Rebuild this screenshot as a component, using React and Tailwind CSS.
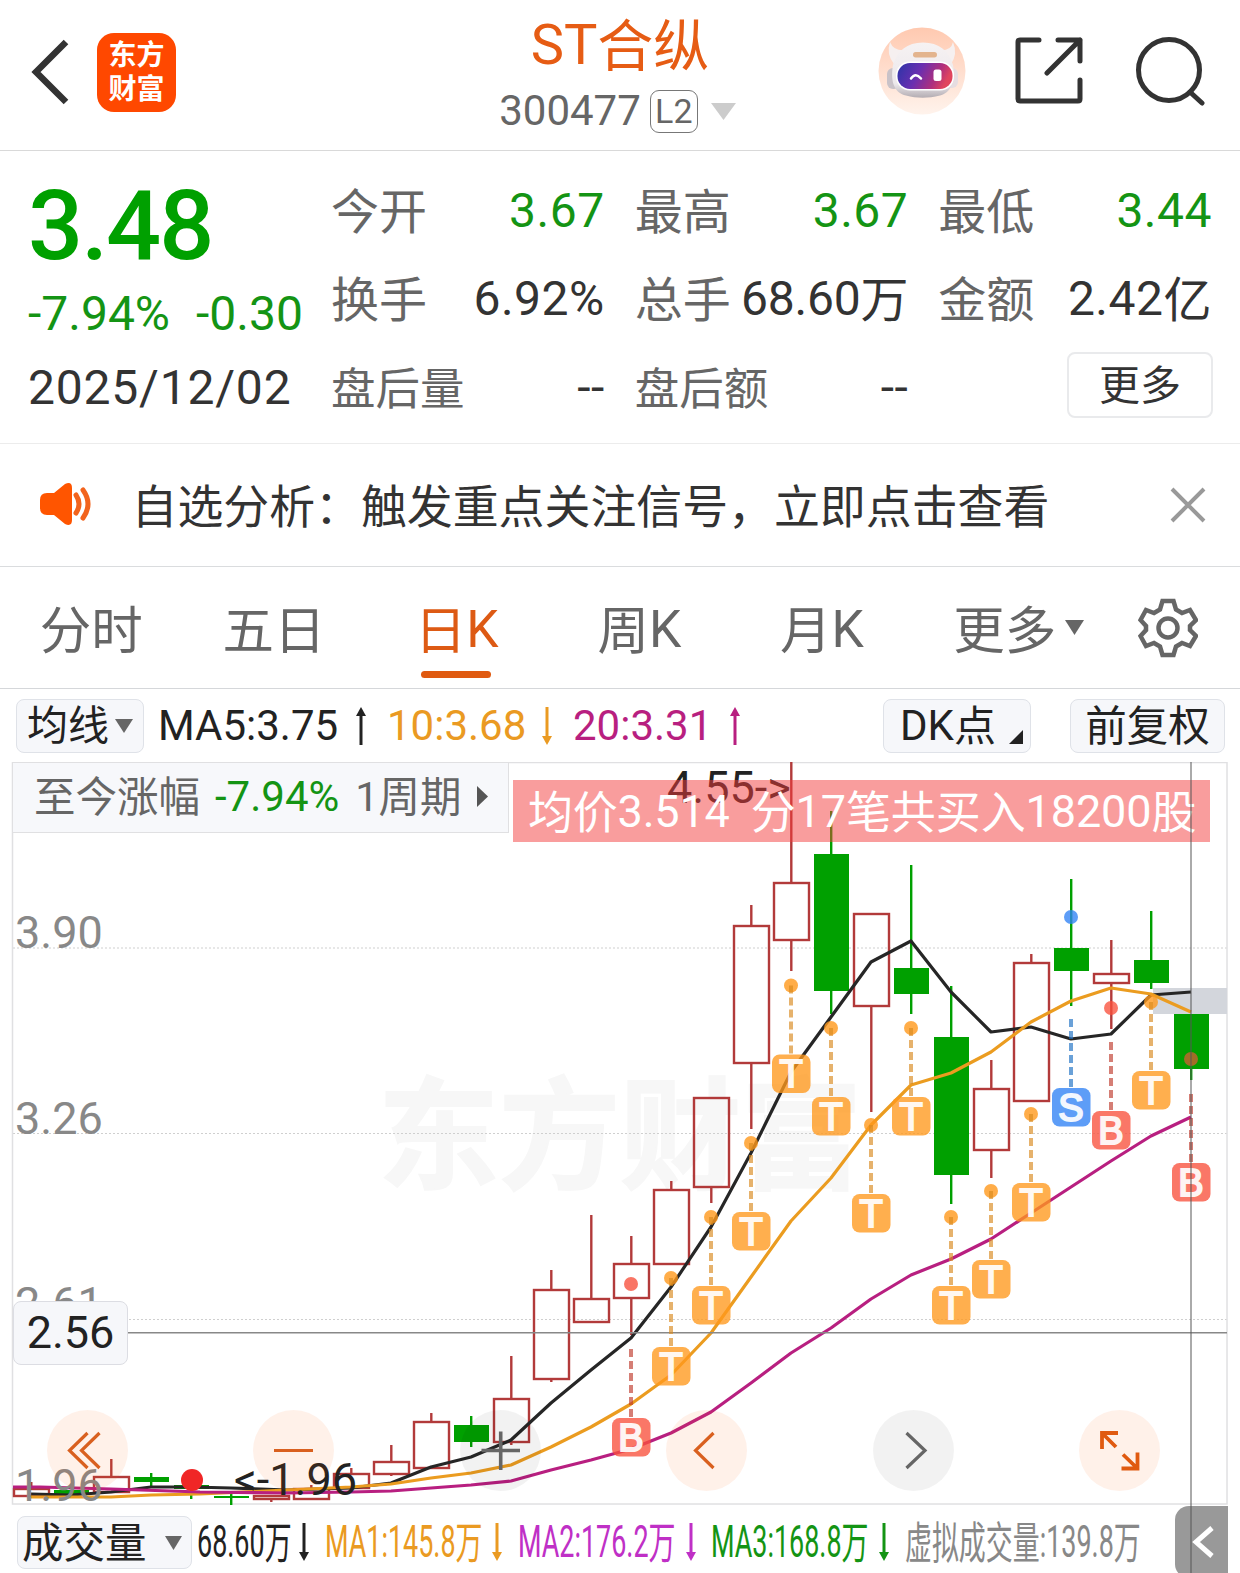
import React from "react";

const UP = "#b23a3a";
const DOWN = "#00a000";

// [x, bodyTop, bodyBottom, wickTop, wickBottom, type]
const candles = [
  [31, 1488, 1497, 1482, 1497, "up"],
  [71, 1490, 1494, 1490, 1494, "down"],
  [111, 1476, 1493, 1459, 1493, "up"],
  [151, 1477, 1482, 1473, 1486, "down"],
  [191, 1485, 1489, 1485, 1499, "down"],
  [231, 1496, 1498, 1494, 1505, "down"],
  [271, 1495, 1500, 1495, 1502, "up"],
  [311, 1488, 1500, 1485, 1500, "up"],
  [351, 1473, 1489, 1468, 1489, "up"],
  [391, 1461, 1475, 1445, 1476, "up"],
  [431, 1421, 1469, 1413, 1469, "up"],
  [471, 1425, 1442, 1416, 1447, "down"],
  [511, 1398, 1443, 1356, 1445, "up"],
  [551, 1289, 1380, 1270, 1382, "up"],
  [591, 1298, 1323, 1215, 1323, "up"],
  [631, 1263, 1299, 1236, 1335, "up"],
  [671, 1189, 1265, 1181, 1265, "up"],
  [711, 1097, 1188, 1097, 1203, "up"],
  [751, 925, 1064, 905, 1129, "up"],
  [791, 882, 941, 762, 971, "up"],
  [831, 854, 991, 811, 1014, "down"],
  [871, 913, 1007, 913, 1112, "up"],
  [911, 968, 994, 865, 1014, "down"],
  [951, 1037, 1175, 986, 1204, "down"],
  [991, 1088, 1151, 1060, 1178, "up"],
  [1031, 962, 1102, 954, 1102, "up"],
  [1071, 948, 971, 879, 1006, "down"],
  [1111, 973, 984, 940, 1029, "up"],
  [1151, 960, 983, 911, 989, "down"],
  [1191, 1014, 1069, 1014, 1080, "down"],
];

const ma5 =
  "31,1494 71,1495 111,1492 151,1487 191,1487 231,1488 287,1490 351,1488 391,1483 431,1467 471,1457 511,1440 551,1403 591,1370 631,1338 671,1287 711,1227 751,1153 791,1072 831,1017 871,962 911,941 951,992 991,1032 1031,1027 1071,1039 1111,1034 1151,995 1191,992";
const ma10 =
  "31,1497 111,1497 151,1495 200,1494 287,1490 351,1487 391,1484 431,1478 471,1473 511,1465 551,1447 591,1427 631,1404 671,1375 711,1333 751,1277 791,1221 831,1178 871,1125 911,1085 951,1073 991,1052 1031,1022 1071,1001 1111,988 1151,994 1191,1012";
const ma20 =
  "13,1487 40,1487 111,1489 200,1492 287,1493 351,1492 391,1491 431,1488 471,1485 511,1481 551,1470 591,1460 631,1449 671,1433 711,1412 751,1383 791,1353 831,1328 871,1299 911,1275 951,1259 991,1239 1031,1213 1071,1187 1111,1161 1151,1136 1191,1117";

// [x, badge centre, letter]
const trades = [
  [631, 1437, "B"],
  [671, 1366, "T"],
  [711, 1305, "T"],
  [751, 1231, "T"],
  [791, 1073.5, "T"],
  [831, 1116, "T"],
  [871, 1213, "T"],
  [911, 1116, "T"],
  [951, 1305, "T"],
  [991, 1279, "T"],
  [1031, 1202, "T"],
  [1071, 1107, "S"],
  [1111, 1130, "B"],
  [1151, 1090, "T"],
  [1191, 1182, "B"],
];

const tradeColors = {
  T: { fill: "#ff981c", dash: "#d98a1e" },
  B: { fill: "#f8513c", dash: "#bf3a2c" },
  S: { fill: "#2f81f5", dash: "#1c6fc4" },
};

const quotes = [
  { label: "今开", value: "3.67", green: true },
  { label: "最高", value: "3.67", green: true },
  { label: "最低", value: "3.44", green: true },
  { label: "换手", value: "6.92%" },
  { label: "总手", value: "68.60", unit: "万" },
  { label: "金额", value: "2.42", unit: "亿" },
  { label: "盘后量", value: "--", small: true },
  { label: "盘后额", value: "--", small: true },
];

const tabs = [
  { cn: "分时" },
  { cn: "五日" },
  { cn: "日", latin: "K", active: true },
  { cn: "周", latin: "K" },
  { cn: "月", latin: "K" },
  { cn: "更多", caret: true },
];

// Chinese glyphs sit a little lower than the digits beside them
const Cn = ({ children }) => <span className="align-[-0.035em] leading-[0]">{children}</span>;

const Arrow = ({ down, className }) => (
  <svg width="14" height="40" viewBox="0 0 14 40" className={className}>
    <g transform={down ? "rotate(180 7 20)" : undefined}>
      <path d="M7 6V39" stroke="currentColor" strokeWidth="3" />
      <path d="M7 1L12 10H2Z" fill="currentColor" />
    </g>
  </svg>
);

const Caret = ({ className, w = 18, h = 14 }) => (
  <svg width={w} height={h} viewBox="0 0 18 14" preserveAspectRatio="none" className={className}>
    <path d="M0 0H18L9 14Z" fill="currentColor" />
  </svg>
);

const Robot = () => (
  <svg width="88" height="88" viewBox="0 0 88 88">
    <defs>
      <linearGradient id="halo" x1="0" y1="0" x2="0" y2="1">
        <stop offset="0" stopColor="#ffc9b0" />
        <stop offset="1" stopColor="#fff3ec" />
      </linearGradient>
      <linearGradient id="shell" x1="0" y1="0" x2="0" y2="1">
        <stop offset="0" stopColor="#f6f2f3" />
        <stop offset="0.75" stopColor="#ece8eb" />
        <stop offset="1" stopColor="#b3acb2" />
      </linearGradient>
      <linearGradient id="visor" x1="0" y1="0" x2="1" y2="0.25">
        <stop offset="0" stopColor="#2b34a8" />
        <stop offset="0.45" stopColor="#6a2fb0" />
        <stop offset="0.8" stopColor="#b02f7c" />
        <stop offset="1" stopColor="#e0455e" />
      </linearGradient>
    </defs>
    <circle cx="44" cy="44" r="43.500" fill="url(#halo)" />
    <path d="M12 15Q8 27 16 37L29 23Q16 25 12 15ZM75 15Q80 27 73 37L59 23Q73 25 75 15Z" fill="#f6f0f0" />
    <rect x="9" y="41" width="13" height="21" rx="6" fill="#c9c2c8" />
    <rect x="67" y="41" width="13" height="20" rx="6" fill="#e6dde1" />
    <path d="M45 15.500C61 15.500 71 24 75 38C78 56 72 66 62 68.500C50 71.500 39 71.500 28 68.500C17 66 12 56 15 38C19 24 29 15.500 45 15.500Z" fill="url(#shell)" />
    <rect x="35" y="25" width="24" height="5.500" rx="2.700" fill="#e3b48e" />
    <rect x="18" y="34.500" width="58" height="29" rx="14" fill="#fff" />
    <rect x="19.500" y="36" width="55" height="26" rx="12.500" fill="url(#visor)" />
    <path d="M33 51.500Q37.500 45 43 51.500" fill="none" stroke="#fff" strokeWidth="2.500" strokeLinecap="round" />
    <rect x="55.500" y="42.500" width="8" height="11.500" rx="2.500" fill="#fff" />
  </svg>
);

const Header = () => (
  <header className="grid h-[151px] grid-cols-[1fr_auto_1fr] border-b border-[#d9d9d9]">
    <div className="flex items-center pl-[30px] pb-[6px]">
      <svg width="40" height="66" viewBox="0 0 40 66" fill="none" stroke="#333" strokeWidth="6.500">
        <path d="M36 3L6 33L36 63" />
      </svg>
      <div className="ml-[27px] flex h-[79px] w-[79px] flex-col items-center justify-center rounded-[17px] bg-[#ff4800] text-[28px] font-bold leading-[34px] text-white">
        <span>
          <Cn>东方</Cn>
        </span>
        <span>
          <Cn>财富</Cn>
        </span>
      </div>
    </div>

    <div className="flex flex-col items-center pt-3">
      <h1 className="text-[56px] leading-[66px] text-[#e65c14]">
        ST<Cn>合纵</Cn>
      </h1>
      <div className="mr-[5px] flex h-[66px] items-center text-[42px] leading-none text-[#666]">
        <span>300477</span>
        <span className="ml-[9px] flex h-[43px] w-[48px] items-center justify-center rounded-[9px] border-[1.5px] border-[#777] text-[34px]">
          L2
        </span>
        <Caret w={25} h={17} className="ml-[13px] text-[#ccc]" />
      </div>
    </div>

    <div className="flex items-center justify-end pr-[34px] pb-[8px]">
      <Robot />
      <svg className="ml-[49px]" width="68" height="68" viewBox="0 0 68 68" fill="none" stroke="#333" strokeWidth="5" strokeLinecap="round" strokeLinejoin="round">
        <path d="M24 3H5Q3 3 3 5V62Q3 64 5 64H63Q65 64 65 62V43" />
        <path d="M43 3H65V24M65 3L32 36" />
      </svg>
      <svg className="ml-[52px]" width="71" height="70" viewBox="0 0 71 70" fill="none" stroke="#333" strokeWidth="5" strokeLinecap="round">
        <circle cx="34" cy="34" r="30.500" />
        <path d="M55 56L67 67" />
      </svg>
    </div>
  </header>
);

const QuotePanel = () => (
  <section className="flex h-[293px] border-b border-[#ececec] text-[48px] text-[#333]">
    <div className="w-[331px] pt-[25px] pl-[28px]">
      <div className="h-[101px] text-[97px] font-medium leading-[101px] tracking-[-2px] text-[#00a000]">3.48</div>
      <div className="flex gap-[26px] whitespace-nowrap leading-[73px] text-[#149414]">
        <span>-7.94%</span>
        <span>-0.30</span>
      </div>
      <div className="leading-[75px] tracking-[0.8px]">2025/12/02</div>
    </div>
    <div className="grid w-[881px] grid-cols-3 grid-rows-[88px_89px_87px] gap-x-[30px] pt-4 leading-[88px]">
      {quotes.map((q) => (
        <div key={q.label} className="flex justify-between whitespace-nowrap">
          <span className={q.small ? "text-[44.500px] text-[#666]" : "text-[#666]"}>
            <Cn>{q.label}</Cn>
          </span>
          <span className={q.green ? "tracking-[0.5px] text-[#149414]" : q.value === "68.60" ? "tracking-[-0.2px]" : "tracking-[0.5px]"}>
            {q.value}
            {q.unit && <Cn>{q.unit}</Cn>}
          </span>
        </div>
      ))}
      <div className="flex items-center justify-end pb-[5px]">
        <button className="-mr-[1px] h-[66px] w-[146px] rounded-[8px] border-2 border-[#e9eaec] text-[41px] leading-[58px]">
          <Cn>更多</Cn>
        </button>
      </div>
    </div>
  </section>
);

const Notice = () => (
  <section className="flex h-[123px] items-center border-b border-[#dadcde] pl-[39px]">
    <svg width="53" height="44" viewBox="0 0 53 44" className="-mt-[2px]">
      <path d="M8 11H15L26 2Q33 -1 33 6V38Q33 45 26 42L15 33H8Q1 33 1 26V18Q1 11 8 11Z" fill="#ff5500" />
      <path d="M37 13Q43 22 37 31M44 8Q54 22 44 36" fill="none" stroke="#f2631c" strokeWidth="5" strokeLinecap="round" />
    </svg>
    <p className="ml-[39.5px] whitespace-nowrap text-[45.9px] leading-[60px] text-[#333]">
      <Cn>自选分析：触发重点关注信号，立即点击查看</Cn>
    </p>
    <svg className="ml-auto mr-[34px]" width="36" height="36" viewBox="0 0 36 36" stroke="#999" strokeWidth="4">
      <path d="M2 2L34 34M34 2L2 34" />
    </svg>
  </section>
);

const Tabs = () => (
  <nav className="flex h-[122px] items-start border-b border-[#d5d7da] text-[#666]">
    <div className="flex w-[1096px] pt-[2px] text-[51.500px] leading-[121px]">
      {tabs.map((tab) => (
        <div key={tab.cn} className={tab.active ? "relative flex-1 text-center text-[#dd5a14]" : "relative flex-1 text-center"}>
          <Cn>{tab.cn}</Cn>
          {tab.latin}
          {tab.active && <span className="absolute bottom-[12px] left-[56px] h-[7px] w-[70px] rounded-full bg-[#e05a10]" />}
          {tab.caret && <Caret w={19} h={15} className="absolute top-[51px] left-[152px]" />}
        </div>
      ))}
    </div>
    <svg className="mt-[31px] ml-[42px]" width="60" height="60" viewBox="0 0 60 60" fill="none" stroke="#666" strokeWidth="4.500">
      <path d="M24.500 3H35.500L38 11.500L44 15L52 12L58 22L52 28V32L58 38L52 48L44 45L38 48.500L35.500 57H24.500L22 48.500L16 45L8 48L2.500 38L8 32V28L2.500 22L8 12L16 15L22 11.500Z" />
      <circle cx="30" cy="30" r="9.500" />
    </svg>
  </nav>
);

const IndicatorBar = () => (
  <div className="flex h-[73px] items-center pl-4 text-[42px] leading-none text-[#222]">
    <button className="flex h-[54px] w-[128px] items-center justify-center gap-[6px] rounded-[8px] border-[1.5px] border-[#dfe2e8] bg-[#f6f7fa] text-[41px]">
      <span>
        <Cn>均线</Cn>
      </span>
      <Caret className="text-[#666]" />
    </button>
    <div className="ml-[14px] flex w-[210px] items-center justify-between">
      MA5:3.75 <Arrow />
    </div>
    <div className="ml-[19px] flex w-[167px] items-center justify-between text-[#ea9a22]">
      10:3.68 <Arrow down />
    </div>
    <div className="ml-[19px] flex w-[169px] items-center justify-between text-[#b81f80]">
      20:3.31 <Arrow />
    </div>
    <button className="relative ml-[141px] h-[54px] w-[148px] rounded-[8px] border-[1.5px] border-[#dfe2e8] bg-[#f6f7fa] pr-[18px]">
      DK<Cn>点</Cn>
      <svg className="absolute right-[7px] bottom-[8px]" width="14" height="14" viewBox="0 0 14 14">
        <path d="M14 0V14H0Z" fill="#222" />
      </svg>
    </button>
    <button className="ml-[39px] h-[54px] w-[155px] rounded-[8px] border-[1.5px] border-[#dfe2e8] bg-[#f6f7fa] text-[41.500px]">
      <Cn>前复权</Cn>
    </button>
  </div>
);

const Candle = ({ data }) => {
  const [x, top, bottom, high, low, type] = data;
  if (type === "down") {
    return (
      <g fill={DOWN}>
        <rect x={x - 17} y={top} width="35" height={bottom - top} />
        <rect x={x - 1} y={high} width="2.400" height={low - high} />
      </g>
    );
  }
  return (
    <g stroke={UP} strokeWidth="2.400" fill="none">
      <path d={`M${x + 0.3} ${high}V${top}M${x + 0.3} ${bottom}V${low}`} />
      <rect x={x - 17} y={top + 1} width="35" height={Math.max(bottom - top - 2, 2)} />
    </g>
  );
};

const Trade = ({ data }) => {
  const [x, y, letter] = data;
  const c = tradeColors[letter];
  return (
    <g>
      {letter === "T" && <circle cx={x} cy={y - 88} r="7" fill={c.fill} opacity="0.8" />}
      <path d={`M${x} ${y - 88}V${y - 20}`} stroke={c.dash} strokeWidth="4" strokeDasharray="8 4" opacity="0.65" />
      <rect x={x - 19} y={y - 19} width="38.500" height="38.500" rx="7.500" fill={c.fill} opacity="0.78" />
      <text x={x} y={y + 13.500} textAnchor="middle" fontSize="38" fill="#fff" stroke="#fff" strokeWidth="2" opacity="0.92" className="font-['Liberation_Sans',sans-serif]">
        {letter}
      </text>
    </g>
  );
};

const Controls = () => (
  <g fill="none" strokeWidth="3.200">
    <g fill="#ff5a00" fillOpacity="0.085">
      <circle cx="87.500" cy="1450.500" r="40.500" />
      <circle cx="293.500" cy="1450.500" r="40.500" />
      <circle cx="706.500" cy="1450.500" r="40.500" />
      <circle cx="1119.500" cy="1450.500" r="40.500" />
    </g>
    <g fill="#000" fillOpacity="0.05">
      <circle cx="500.500" cy="1450.500" r="40.500" />
      <circle cx="913.500" cy="1450.500" r="40.500" />
    </g>
    <g stroke="#d9601f">
      <path d="M87.500 1433L69.500 1450.500L87.500 1468M99.500 1433L81.500 1450.500L99.500 1468" />
      <path d="M274 1450.500H313" />
      <path d="M713.500 1433L695.500 1450.500L713.500 1468" />
    </g>
    <path d="M1116 1447L1102 1433M1102 1449V1433H1118M1123 1454.500L1137.500 1468.500M1137.500 1452.500V1468.500H1121.500" stroke="#e05a10" strokeWidth="3.800" />
    <g stroke="#666">
      <path d="M481.500 1450.500H520M500.700 1431.500V1470" strokeWidth="3.600" />
      <path d="M906.500 1433L925 1450.500L906.500 1468" />
    </g>
  </g>
);

const KLineChart = () => (
  <section className="relative h-[743px]">
    <svg width="1240" height="743" viewBox="0 762 1240 743" className="block">
      <text x="378" y="1179" fontSize="121" fontWeight="700" fill="#f7f7f7" stroke="#f7f7f7" strokeWidth="2">
        东方财富
      </text>
      <path d="M13 948H1227M13 1133.500H1227M13 1319.500H1227" stroke="#cfcfcf" strokeWidth="1" strokeDasharray="2 2" />
      <rect x="12.500" y="762.500" width="1214.500" height="741.500" fill="none" stroke="#e0e0e2" strokeWidth="1.500" />
      <rect x="1153" y="988" width="74" height="26" fill="#d3d6dc" />

      {candles.map((c) => (
        <Candle key={c[0]} data={c} />
      ))}

      <g fill="none" strokeWidth="3.200" strokeLinejoin="round">
        <polyline points={ma5} stroke="#262626" />
        <polyline points={ma10} stroke="#eb9c20" />
        <polyline points={ma20} stroke="#b81f80" />
      </g>

      <path d="M128 1332.700H1227" stroke="#888" strokeWidth="1.500" />

      <circle cx="631" cy="1284" r="7" fill="#f97565" />
      <circle cx="1071" cy="917" r="7" fill="#2f81f5" opacity="0.78" />
      <circle cx="1111" cy="1008" r="7" fill="#f8513c" opacity="0.78" />
      <circle cx="1191" cy="1059" r="7" fill="#f8513c" opacity="0.65" />
      <circle cx="192" cy="1480" r="11" fill="#f02626" />
      {trades.map((t) => (
        <Trade key={t[0]} data={t} />
      ))}

      <g fontSize="45">
        <g fill="#888">
          <text x="15" y="947.500">3.90</text>
          <text x="15" y="1133.500">3.26</text>
          <text x="15" y="1319">2.61</text>
          <text x="15" y="1500.500">1.96</text>
        </g>
        <text x="667" y="803" fill="#222">4.55-&gt;</text>
        <text x="234" y="1495" fill="#222">&lt;-1.96</text>
      </g>
      <Controls />
    </svg>

    <div className="absolute top-0 left-[12px] flex h-[71px] w-[497px] items-center border-[1.5px] border-[#e0e0e2] bg-[#f7f8fb] pb-[2px] pl-[21px] text-[41.500px] leading-none text-[#666]">
      <span>
        <Cn>至今涨幅</Cn>
      </span>
      <span className="ml-[15px] text-[42px] text-[#149414]">-7.94%</span>
      <span className="ml-[16px]">
        1<Cn>周期</Cn>
      </span>
      <svg className="ml-[15px]" width="11" height="21" viewBox="0 0 11 21">
        <path d="M0 0L11 10.500L0 21Z" fill="#555" />
      </svg>
    </div>
    <div className="absolute top-[18px] left-[513px] flex h-[62px] w-[697px] items-center gap-[21px] whitespace-nowrap bg-[rgba(243,59,59,0.5)] pl-[15px] text-[45px] leading-none text-white">
      <span className="tracking-[-0.2px]">
        <Cn>均价</Cn>3.514
      </span>
      <span className="tracking-[-0.1px]">
        <Cn>分</Cn>17<Cn>笔共买入</Cn>18200<Cn>股</Cn>
      </span>
    </div>
    <div className="absolute top-[539px] left-[13px] flex h-[64px] w-[115px] items-center justify-center rounded-[8px] border-[1.5px] border-[#dcdde3] bg-[#f6f7fa] pb-[2px] text-[45px] leading-none text-[#222]">
      2.56
    </div>
  </section>
);

const VolumeItem = ({ className, width, label, value, unit }) => (
  <div className={className}>
    <div style={{ width }}>
      <span className="inline-block origin-left scale-x-[0.612] whitespace-nowrap">
        {label && <Cn>{label}</Cn>}
        {value}
        <Cn>{unit}</Cn>
      </span>
    </div>
  </div>
);

const VolumeBar = () => (
  <footer className="flex h-[68px] items-start pl-[17px] text-[44px] leading-[54px] text-[#222]">
    <button className="mt-[11px] flex h-[53px] w-[175px] shrink-0 items-center gap-[18px] rounded-[8px] border-[1.5px] border-[#dfe2e8] bg-[#f6f7fa] pl-[4px] text-[41.500px] leading-none">
      <span>
        <Cn>成交量</Cn>
      </span>
      <Caret w={17} className="text-[#666]" />
    </button>
    <div className="mt-[10px] ml-[5px] flex shrink-0 items-center">
      <VolumeItem width={100} value="68.60" unit="万" />
      <Arrow down />
      <VolumeItem className="ml-[14px] text-[#ea9a22]" width={165} value="MA1:145.8" unit="万" />
      <Arrow down className="text-[#ea9a22]" />
      <VolumeItem className="ml-[14px] text-[#bf30c6]" width={166} value="MA2:176.2" unit="万" />
      <Arrow down className="text-[#bf30c6]" />
      <VolumeItem className="ml-[13px] text-[#149414]" width={166} value="MA3:168.8" unit="万" />
      <Arrow down className="text-[#149414]" />
      <VolumeItem className="ml-[14px] text-[#888]" width={240} label="虚拟成交量" value=":139.8" unit="万" />
    </div>
  </footer>
);

export default function App() {
  return (
    <div className="relative h-[1573px] w-[1240px] overflow-hidden bg-white font-[Roboto,'Noto_Sans_CJK_SC',sans-serif]">
      <Header />
      <QuotePanel />
      <Notice />
      <Tabs />
      <IndicatorBar />
      <KLineChart />
      <VolumeBar />

      {/* side drawer handle and crosshair lie over the chart */}
      <div className="absolute top-[1506px] left-[1175px] h-[72px] w-[53px] rounded-l-[14px] bg-[#999]">
        <svg className="absolute top-[19px] left-[16px]" width="24" height="34" viewBox="0 0 24 34" fill="none" stroke="#fff" strokeWidth="5">
          <path d="M21 3L5 17L21 31" />
        </svg>
      </div>
      <div className="absolute top-[762px] left-[1190px] h-[811px] w-[2px] bg-[#555]/50" />
    </div>
  );
}
